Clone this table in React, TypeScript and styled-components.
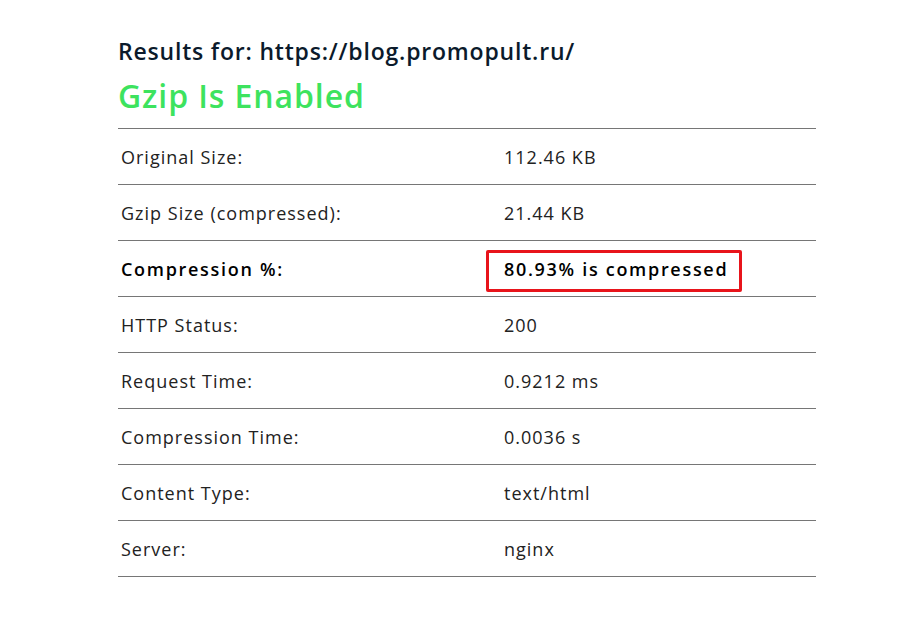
import React from "react";
import styled, { createGlobalStyle } from "styled-components";

const Global = createGlobalStyle`
  html, body { margin: 0; padding: 0; background: #ffffff; }
  body { font-family: "Open Sans", "Liberation Sans", sans-serif; }
`;

const Page = styled.main`
  padding: 35px 0 0 118px;
  width: 698px;
`;

const Title = styled.h2`
  margin: 0;
  font-size: 23px;
  line-height: 32px;
  font-weight: 600;
  letter-spacing: 0.8px;
  color: #0b1a2b;
`;

const Status = styled.h1`
  margin: 5px 0 0 0;
  font-size: 32px;
  line-height: 48px;
  font-weight: 600;
  letter-spacing: 0.9px;
  color: #3de35e;
`;

const Table = styled.div`
  margin-top: 8px;
  border-top: 1px solid #767676;
`;

const Row = styled.div<{ $bold?: boolean }>`
  display: grid;
  grid-template-columns: 383px 1fr;
  height: 55px;
  align-items: center;
  border-bottom: 1px solid #767676;
  font-size: 18px;
  letter-spacing: ${(p) => (p.$bold ? "1.7px" : "1px")};
  color: ${(p) => (p.$bold ? "#000" : "#222")};
  font-weight: ${(p) => (p.$bold ? 600 : 400)};
`;

const Cell = styled.div`
  padding-left: 3px;
`;

const Highlight = styled.span`
  position: relative;
  &::before {
    content: "";
    position: absolute;
    left: -18px;
    right: -14px;
    top: -7px;
    bottom: -11px;
    border: 3px solid #e8141b;
    border-radius: 2px;
  }
`;

const rows: { label: string; value: string; bold?: boolean }[] = [
  { label: "Original Size:", value: "112.46 KB" },
  { label: "Gzip Size (compressed):", value: "21.44 KB" },
  { label: "Compression %:", value: "80.93% is compressed", bold: true },
  { label: "HTTP Status:", value: "200" },
  { label: "Request Time:", value: "0.9212 ms" },
  { label: "Compression Time:", value: "0.0036 s" },
  { label: "Content Type:", value: "text/html" },
  { label: "Server:", value: "nginx" },
];

export default function App() {
  return (
    <>
      <Global />
      <Page>
        <Title>Results for: https://blog.promopult.ru/</Title>
        <Status>Gzip Is Enabled</Status>
        <Table>
          {rows.map((r) => (
            <Row key={r.label} $bold={r.bold}>
              <Cell>{r.label}</Cell>
              <Cell>{r.bold ? <Highlight>{r.value}</Highlight> : r.value}</Cell>
            </Row>
          ))}
        </Table>
      </Page>
    </>
  );
}
